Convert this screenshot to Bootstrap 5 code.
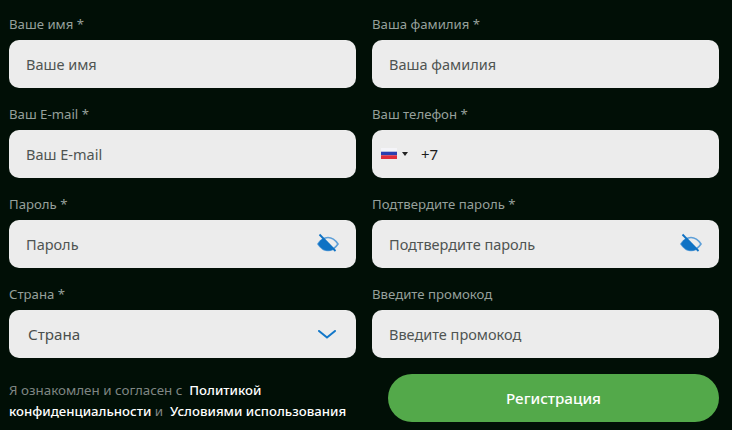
<!DOCTYPE html>
<html lang="ru">
<head>
<meta charset="utf-8">
<title>Регистрация</title>
<link href="https://cdn.jsdelivr.net/npm/bootstrap@5.3.0/dist/css/bootstrap.min.css" rel="stylesheet">
<style>
html,body{margin:0;height:430px;overflow:hidden;background:#010f06;font-family:"Noto Sans","Open Sans",sans-serif}
.reg-wrap{padding:14px 13px 0 9px}
.reg-grid{display:grid;grid-template-columns:347px 347px;column-gap:16px;row-gap:16px}
.reg-label{display:block;height:26px;margin:0;padding-top:.5px;font-size:13.2px;line-height:18px;color:#96a09b}
.reg-box{position:relative;height:48px}
.reg-input{height:48px;border:0;border-radius:10px;background:#ececec;padding:0 17px;font-size:14.5px;color:#4a4f4d;box-shadow:none}
.reg-input::placeholder{color:#4f5452;opacity:1}
.reg-select{padding-left:19px;background-image:none;font-size:15.2px}
.reg-phone{padding-left:49px;color:#1d1d1d;font-size:15px}
.reg-flag{position:absolute;left:9px;top:18px;display:flex;align-items:center;gap:5px}
.reg-eye{position:absolute;right:17px;top:13px}
.reg-chev{position:absolute;right:20px;top:20px}
.reg-foot{display:grid;grid-template-columns:347px 331px;column-gap:32px;margin-top:16px}
.reg-note{margin:0;padding-top:6px;font-size:13.4px;line-height:21px;color:#7f8683}
.reg-note a{color:#fff;text-decoration:none;font-weight:500;font-size:13.2px}
.reg-btn{height:48px;border:0;border-radius:24px;background:#53a94a;color:#fff;font-size:15.2px;font-weight:500}
</style>
</head>
<body>
<form class="reg-wrap">
  <div class="reg-grid">
    <div><label class="reg-label">Ваше имя *</label><div class="reg-box"><input class="form-control reg-input" placeholder="Ваше имя"></div></div>
    <div><label class="reg-label">Ваша фамилия *</label><div class="reg-box"><input class="form-control reg-input" placeholder="Ваша фамилия"></div></div>
    <div><label class="reg-label">Ваш E-mail *</label><div class="reg-box"><input class="form-control reg-input" placeholder="Ваш E-mail"></div></div>
    <div><label class="reg-label">Ваш телефон *</label><div class="reg-box"><input class="form-control reg-input reg-phone" value="+7">
      <span class="reg-flag"><svg width="16" height="11" viewBox="0 0 16 11"><rect width="16" height="11" fill="#f4f4f8"/><rect y="3.700" width="16" height="3.600" fill="#2b3fb0"/><rect y="7.300" width="16" height="3.700" fill="#e02c3a"/></svg><svg width="6" height="4" viewBox="0 0 6 4"><path d="M0 0h6L3 4z" fill="#222"/></svg></span></div></div>
    <div><label class="reg-label">Пароль *</label><div class="reg-box"><input class="form-control reg-input" placeholder="Пароль">
      <svg class="reg-eye" width="22" height="20" viewBox="0 0 22 20"><path d="M1 11C4 6.500 7 4.500 11 4.500S18 6.500 21 11C18 15.500 15 17.500 11 17.500S4 15.500 1 11z" fill="none" stroke="#5d9fd8" stroke-width="1.600"/><path d="M1 11C3 8 4.500 6.300 6.500 5.300L16.500 16c-1.700 1-3.500 1.500-5.500 1.500-4 0-7-2-10-6.500z" fill="#0f72c4"/><path d="M2.500 1.500L18.500 18" stroke="#0f72c4" stroke-width="1.800"/></svg></div></div>
    <div><label class="reg-label">Подтвердите пароль *</label><div class="reg-box"><input class="form-control reg-input" placeholder="Подтвердите пароль">
      <svg class="reg-eye" width="22" height="20" viewBox="0 0 22 20"><path d="M1 11C4 6.500 7 4.500 11 4.500S18 6.500 21 11C18 15.500 15 17.500 11 17.500S4 15.500 1 11z" fill="none" stroke="#5d9fd8" stroke-width="1.600"/><path d="M1 11C3 8 4.500 6.300 6.500 5.300L16.500 16c-1.700 1-3.500 1.500-5.500 1.500-4 0-7-2-10-6.500z" fill="#0f72c4"/><path d="M2.500 1.500L18.500 18" stroke="#0f72c4" stroke-width="1.800"/></svg></div></div>
    <div><label class="reg-label">Страна *</label><div class="reg-box"><select class="form-select reg-input reg-select"><option>Страна</option></select>
      <svg class="reg-chev" width="18" height="9" viewBox="0 0 18 9"><path d="M1 1l8 6.500L17 1" fill="none" stroke="#1277c9" stroke-width="2" stroke-linecap="round"/></svg></div></div>
    <div><label class="reg-label">Введите промокод</label><div class="reg-box"><input class="form-control reg-input" placeholder="Введите промокод"></div></div>
  </div>
  <div class="reg-foot">
    <p class="reg-note">Я ознакомлен и согласен с &nbsp;<a href="#">Политикой</a> <a href="#">конфиденциальности</a> и &nbsp;<a href="#">Условиями использования</a></p>
    <button type="button" class="btn reg-btn">Регистрация</button>
  </div>
</form>
</body>
</html>
